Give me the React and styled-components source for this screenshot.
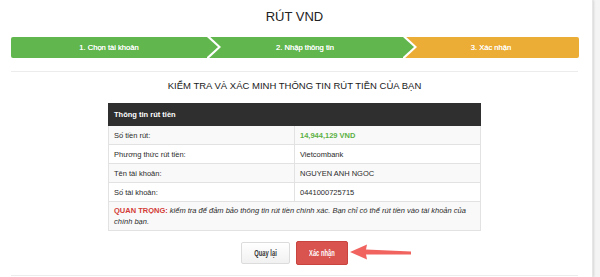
import React from "react";
import styled, { createGlobalStyle, css } from "styled-components";

const Global = createGlobalStyle`
  html, body { margin: 0; padding: 0; background: #f4f4f4; }
  body { font-family: "Liberation Sans", Arial, sans-serif; color: #333; }
`;

const Page = styled.div`
  width: 593px;
  height: 277px;
  background: #fff;
  box-shadow: 1px 0 2px rgba(0, 0, 0, 0.12);
  border-right: 1px solid #e6e6e6;
  box-sizing: border-box;
  padding: 9px 14px 0 11px;
  overflow: hidden;
`;

const Title = styled.h1`
  margin: 0;
  font-size: 13px;
  line-height: 16px;
  font-weight: normal;
  text-align: center;
  color: #222;
`;

const Steps = styled.div`
  display: flex;
  height: 21px;
  margin-top: 12px;
`;

const Step = styled.div`
  position: relative;
  flex: 0 0 ${(p) => p.$w}px;
  background: ${(p) => p.$c};
  color: #fff;
  font-size: 7.6px;
  display: flex;
  align-items: center;
  justify-content: center;
  border-radius: ${(p) => p.$radius || "0"};
  ${(p) =>
    p.$arrow &&
    css`
      &::before {
        content: "";
        position: absolute;
        right: -14px;
        top: -2.9px;
        border-left: 14px solid #fff;
        border-top: 13.4px solid transparent;
        border-bottom: 13.4px solid transparent;
        z-index: 1;
      }
      &::after {
        content: "";
        position: absolute;
        right: -11px;
        top: 0;
        border-left: 11px solid ${p.$c};
        border-top: 10.5px solid transparent;
        border-bottom: 10.5px solid transparent;
        z-index: 2;
      }
    `}
`;

const StepLabel = styled.span`
  position: relative;
  z-index: 3;
  text-shadow: 0 0 0.4px #fff;
`;

const Rule = styled.div`
  height: 1px;
  background: #ececec;
  margin-top: ${(p) => p.$mt}px;
`;

const Heading = styled.h2`
  margin: 8px 0 0;
  font-size: 9.5px;
  line-height: 12px;
  font-weight: normal;
  text-align: center;
  color: #1a1a1a;
`;

const Table = styled.table`
  width: 373px;
  margin: 11px 0 0 97px;
  border-collapse: collapse;
  font-size: 7.5px;
  color: #2a2a2a;
  table-layout: fixed;
`;

const HeadCell = styled.th`
  background: #2f2f2f;
  color: #fff;
  font-weight: bold;
  text-align: left;
  height: 21px;
  padding: 0 5px;
  border: 1px solid #2f2f2f;
`;

const Row = styled.tr`
  background: ${(p) => (p.$alt ? "#f9f9f9" : "#fff")};
`;

const Cell = styled.td`
  height: 18px;
  padding: 0 5px;
  border: 1px solid #e2e2e2;
  width: ${(p) => (p.$label ? "114px" : "auto")};
  color: ${(p) => (p.$green ? "#5cb144" : "#2a2a2a")};
  font-weight: ${(p) => (p.$green ? "bold" : "normal")};
`;

const NoteCell = styled.td`
  height: 29px;
  box-sizing: border-box;
  padding: 4px 5px 3px;
  line-height: 10.5px;
  border: 1px solid #e2e2e2;
  background: #f9f9f9;
  font-style: italic;
  vertical-align: top;
`;

const Important = styled.span`
  color: #d33b36;
  font-weight: bold;
  font-style: normal;
`;

const Actions = styled.div`
  position: relative;
  display: flex;
  justify-content: center;
  align-items: center;
  gap: 6px;
  margin-top: 10px;
  height: 24px;
`;

const Button = styled.button`
  box-sizing: border-box;
  width: ${(p) => (p.$primary ? 52 : 49)}px;
  height: ${(p) => (p.$primary ? 24 : 22)}px;
  border-radius: 2px;
  border: 1px solid ${(p) => (p.$primary ? "#c9443f" : "#dcdcdc")};
  background: ${(p) =>
    p.$primary ? "#d9534f" : "linear-gradient(#ffffff, #f1f1f1)"};
  color: ${(p) => (p.$primary ? "#fff" : "#333")};
  padding: 0;
  display: flex;
  align-items: center;
  justify-content: center;
  cursor: pointer;
`;

const Condensed = styled.span`
  display: inline-block;
  font-family: "Liberation Sans", Arial, sans-serif;
  font-weight: bold;
  font-size: 8.5px;
  transform: scaleX(0.68);
  white-space: nowrap;
`;

const Pointer = styled.svg`
  position: absolute;
  left: 338px;
  top: 1px;
`;

export default function App() {
  return (
    <>
      <Global />
      <Page>
        <Title>RÚT VND</Title>
        <Steps>
          <Step $w={196} $c="#62b64e" $arrow $radius="2px 0 0 2px">
            <StepLabel>1. Chọn tài khoản</StepLabel>
          </Step>
          <Step $w={196} $c="#62b64e" $arrow>
            <StepLabel>2. Nhập thông tin</StepLabel>
          </Step>
          <Step $w={176} $c="#ecad36" $radius="0 2px 2px 0">
            <StepLabel>3. Xác nhận</StepLabel>
          </Step>
        </Steps>
        <Rule $mt={13} />
        <Heading>KIỂM TRA VÀ XÁC MINH THÔNG TIN RÚT TIỀN CỦA BẠN</Heading>
        <Table>
          <thead>
            <tr>
              <HeadCell colSpan={2}>Thông tin rút tiền</HeadCell>
            </tr>
          </thead>
          <tbody>
            <Row $alt>
              <Cell $label>Số tiền rút:</Cell>
              <Cell $green>14,944,129 VND</Cell>
            </Row>
            <Row>
              <Cell $label>Phương thức rút tiền:</Cell>
              <Cell>Vietcombank</Cell>
            </Row>
            <Row $alt>
              <Cell $label>Tên tài khoản:</Cell>
              <Cell>NGUYEN ANH NGOC</Cell>
            </Row>
            <Row>
              <Cell $label>Số tài khoản:</Cell>
              <Cell>0441000725715</Cell>
            </Row>
            <tr>
              <NoteCell colSpan={2}>
                <Important>QUAN TRỌNG:</Important> kiểm tra để đảm bảo thông tin
                rút tiền chính xác. Bạn chỉ có thể rút tiền vào tài khoản của
                chính bạn.
              </NoteCell>
            </tr>
          </tbody>
        </Table>
        <Actions>
          <Button>
            <Condensed>Quay lại</Condensed>
          </Button>
          <Button $primary>
            <Condensed>Xác nhận</Condensed>
          </Button>
          <Pointer width="64" height="20" viewBox="0 0 64 20">
            <path
              d="M1 10 L18 2.5 L17 7.5 L62 9.5 L62 12.5 L17 12.5 L18 17.5 Z"
              fill="#f0635f"
            />
          </Pointer>
        </Actions>
        <Rule $mt={10} />
      </Page>
    </>
  );
}
